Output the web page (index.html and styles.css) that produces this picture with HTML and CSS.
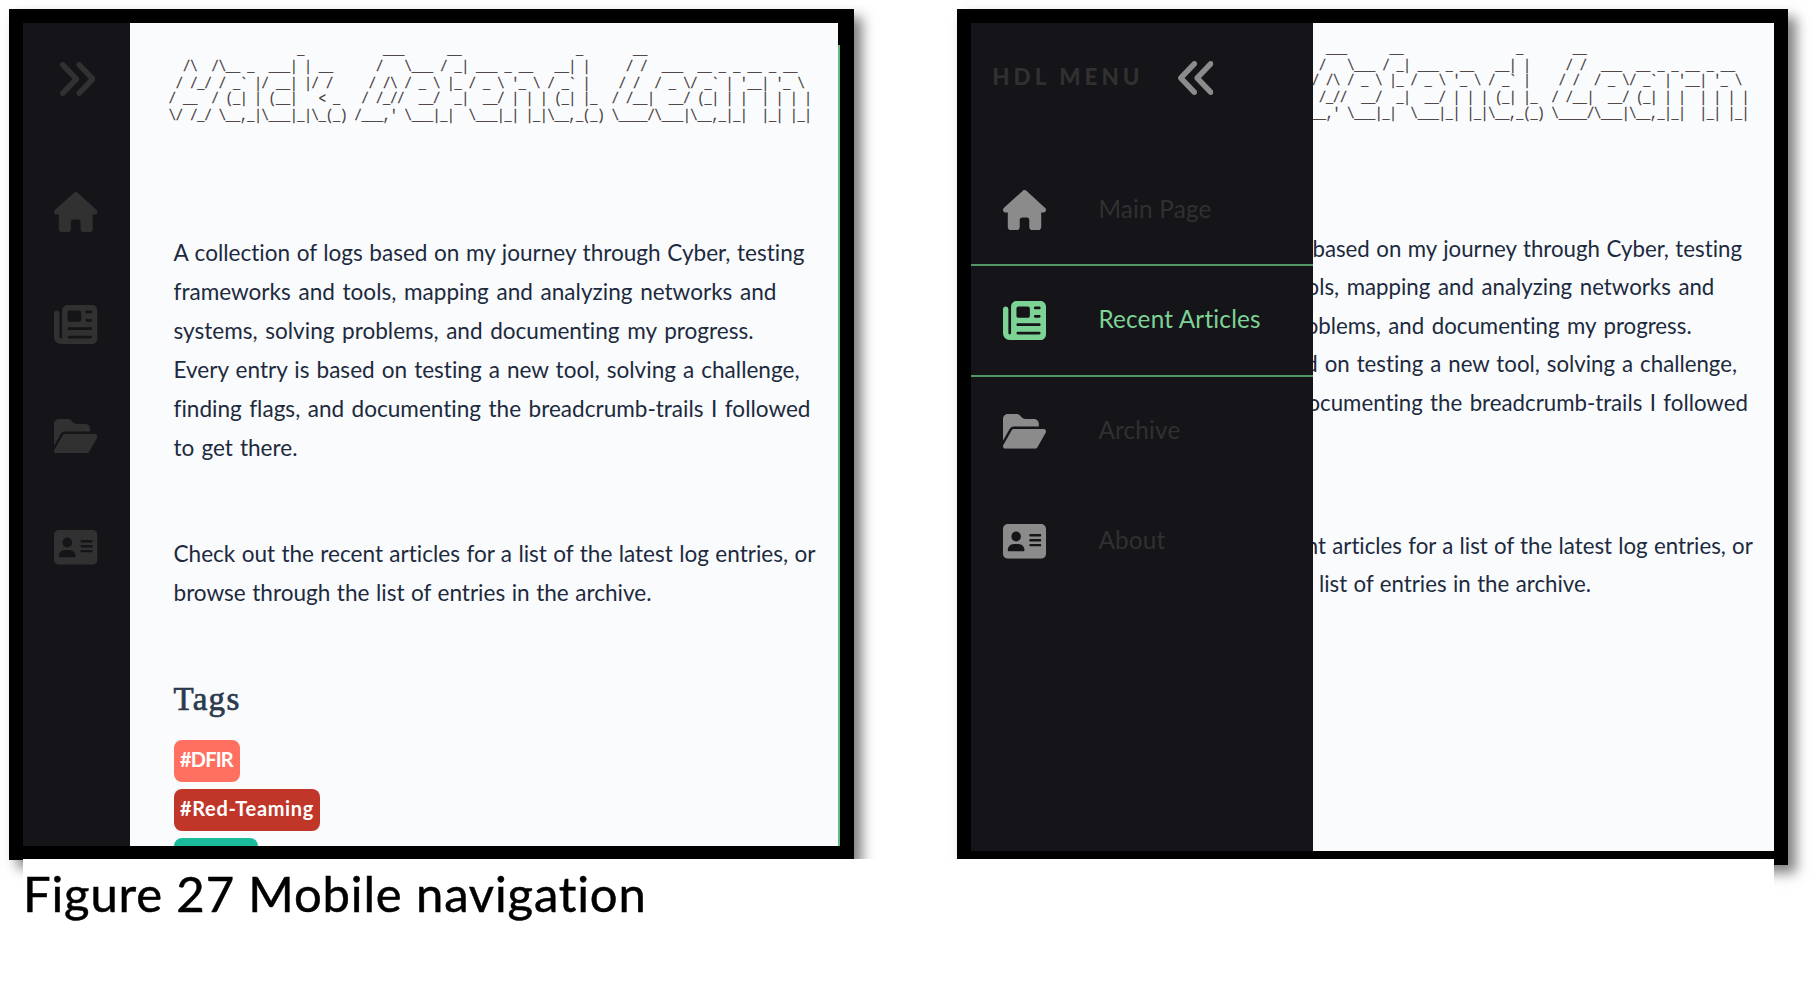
FILE: index.html
```html
<!DOCTYPE html>
<html lang="en">
<head>
<meta charset="utf-8">
<title>Mobile navigation</title>
<link rel="stylesheet" href="styles.css">
</head>
<body>
<svg class="sprite" aria-hidden="true">
  <symbol id="angles" viewBox="64 64 416 384" preserveAspectRatio="none"><path d="M470.6 278.6c12.5-12.5 12.5-32.8 0-45.3l-160-160c-12.5-12.5-32.8-12.5-45.3 0s-12.5 32.8 0 45.3L402.7 256 265.4 393.4c-12.5 12.5-12.5 32.8 0 45.3s32.8 12.5 45.3 0l160-160zm-352 160l160-160c12.5-12.5 12.5-32.8 0-45.3l-160-160c-12.5-12.5-32.8-12.5-45.3 0s-12.5 32.8 0 45.3L210.7 256 73.4 393.4c-12.5 12.5-12.5 32.8 0 45.3s32.8 12.5 45.3 0z"/></symbol>
  <symbol id="house" viewBox="0 0 576 512" preserveAspectRatio="none"><path d="M575.8 255.5c0 18-15 32.1-32 32.1h-32l.7 160.2c0 2.7-.2 5.4-.5 8.1V472c0 22.1-17.9 40-40 40H392c-22.1 0-40-17.9-40-40V384c0-17.7-14.3-32-32-32H256c-17.7 0-32 14.3-32 32v88c0 22.1-17.9 40-40 40H104c-22.1 0-40-17.9-40-40V287.6H32c-18 0-32-14-32-32.1c0-9 3-17 10-24L266.4 8c7-7 15-8 22-8s15 2 21 7L564.8 231.5c8 7 12 15 11 24z"/></symbol>
  <symbol id="news" viewBox="0 32 512 448" preserveAspectRatio="none"><path d="M96 96c0-35.3 28.7-64 64-64H448c35.3 0 64 28.7 64 64V416c0 35.3-28.7 64-64 64H80c-44.2 0-80-35.8-80-80V128c0-17.7 14.3-32 32-32s32 14.3 32 32V400c0 8.8 7.2 16 16 16s16-7.2 16-16V96zm64 24v80c0 13.3 10.7 24 24 24H296c13.3 0 24-10.7 24-24V120c0-13.3-10.7-24-24-24H184c-13.3 0-24 10.7-24 24zm208-8c0 8.8 7.2 16 16 16h48c8.8 0 16-7.2 16-16s-7.2-16-16-16H384c-8.8 0-16 7.2-16 16zm0 96c0 8.8 7.2 16 16 16h48c8.8 0 16-7.2 16-16s-7.2-16-16-16H384c-8.8 0-16 7.2-16 16zM160 304c0 8.8 7.2 16 16 16H432c8.8 0 16-7.2 16-16s-7.2-16-16-16H176c-8.8 0-16 7.2-16 16zm0 96c0 8.8 7.2 16 16 16H432c8.8 0 16-7.2 16-16s-7.2-16-16-16H176c-8.8 0-16 7.2-16 16z"/></symbol>
  <symbol id="folder" viewBox="0 32 576 448" preserveAspectRatio="none"><path d="M88.7 223.8L0 375.8V96C0 60.7 28.7 32 64 32H181.5c17 0 33.3 6.7 45.3 18.7l26.5 26.5c12 12 28.3 18.7 45.3 18.7H416c35.3 0 64 28.7 64 64v32H144c-22.8 0-43.8 12.1-55.3 31.8zm27.6 16.1C122.1 230 132.6 224 144 224H544c11.5 0 22 6.1 27.7 16.1s5.7 22.2-.1 32.1l-112 192C453.9 474 443.4 480 432 480H32c-11.5 0-22-6.1-27.7-16.1s-5.7-22.2 .1-32.1l112-192z"/></symbol>
  <symbol id="card" viewBox="0 32 576 448" preserveAspectRatio="none"><path d="M64 32C28.7 32 0 60.7 0 96V416c0 35.3 28.7 64 64 64H512c35.3 0 64-28.7 64-64V96c0-35.3-28.7-64-64-64H64zm80 256h64c44.2 0 80 35.8 80 80c0 8.8-7.2 16-16 16H80c-8.8 0-16-7.2-16-16c0-44.2 35.8-80 80-80zm-32-96a64 64 0 1 1 128 0 64 64 0 1 1-128 0zm256-32H496c8.8 0 16 7.2 16 16s-7.2 16-16 16H368c-8.8 0-16-7.2-16-16s7.2-16 16-16zm0 64H496c8.8 0 16 7.2 16 16s-7.2 16-16 16H368c-8.8 0-16-7.2-16-16s7.2-16 16-16zm0 64H496c8.8 0 16 7.2 16 16s-7.2 16-16 16H368c-8.8 0-16-7.2-16-16s7.2-16 16-16z"/></symbol>
</svg>
<main class="figure">
  <div class="shots">
    <section class="frame frame-closed">
      <div class="screen">
        <nav class="rail">
          <div class="rail-toggle"><svg class="ico ico-angles"><use href="#angles"/></svg></div>
          <div class="rail-item"><svg class="ico ico-house"><use href="#house"/></svg></div>
          <div class="rail-item"><svg class="ico ico-news"><use href="#news"/></svg></div>
          <div class="rail-item"><svg class="ico ico-flat"><use href="#folder"/></svg></div>
          <div class="rail-item"><svg class="ico ico-flat"><use href="#card"/></svg></div>
        </nav>
        <article class="content">
<pre class="banner">
                  _           ___      __                _       __
  /\  /\__ _  ___| | __      /   \___ / _| ___ _ __   __| |     / /  ___  __ _ _ __ _ __
 / /_/ / _` |/ __| |/ /     / /\ / _ \ |_ / _ \ '_ \ / _` |    / /  / _ \/ _` | '__| '_ \
/ __  / (_| | (__|   &lt; _   / /_//  __/  _|  __/ | | | (_| |_  / /__|  __/ (_| | |  | | | |
\/ /_/ \__,_|\___|_|\_(_) /___,' \___|_|  \___|_| |_|\__,_(_) \____/\___|\__,_|_|  |_| |_|
</pre>
          <p class="para">
            <span class="line w1">A collection of logs based on my journey through Cyber, testing</span>
            <span class="line w2">frameworks and tools, mapping and analyzing networks and</span>
            <span class="line w3">systems, solving problems, and documenting my progress.</span>
            <span class="line w4">Every entry is based on testing a new tool, solving a challenge,</span>
            <span class="line w5">finding flags, and documenting the breadcrumb-trails I followed</span>
            <span class="line w6">to get there.</span>
          </p>
          <p class="para">
            <span class="line w7">Check out the recent articles for a list of the latest log entries, or</span>
            <span class="line w8">browse through the list of entries in the archive.</span>
          </p>
          <h2 class="heading">Tags</h2>
          <div class="tags">
            <span class="tag tag-dfir">#DFIR</span>
            <span class="tag tag-red">#Red-Teaming</span>
            <span class="tag tag-green"></span>
          </div>
        </article>
      </div>
    </section>
    <section class="frame frame-open">
      <div class="screen">
        <article class="content">
<pre class="banner">
                  _           ___      __                _       __
  /\  /\__ _  ___| | __      /   \___ / _| ___ _ __   __| |     / /  ___  __ _ _ __ _ __
 / /_/ / _` |/ __| |/ /     / /\ / _ \ |_ / _ \ '_ \ / _` |    / /  / _ \/ _` | '__| '_ \
/ __  / (_| | (__|   &lt; _   / /_//  __/  _|  __/ | | | (_| |_  / /__|  __/ (_| | |  | | | |
\/ /_/ \__,_|\___|_|\_(_) /___,' \___|_|  \___|_| |_|\__,_(_) \____/\___|\__,_|_|  |_| |_|
</pre>
          <p class="para">
            <span class="line w1">A collection of logs based on my journey through Cyber, testing</span>
            <span class="line w2">frameworks and tools, mapping and analyzing networks and</span>
            <span class="line w3">systems, solving problems, and documenting my progress.</span>
            <span class="line w4">Every entry is based on testing a new tool, solving a challenge,</span>
            <span class="line w5">finding flags, and documenting the breadcrumb-trails I followed</span>
            <span class="line w6">&nbsp;</span>
          </p>
          <p class="para">
            <span class="line w7">Check out the recent articles for a list of the latest log entries, or</span>
            <span class="line w8">browse through the list of entries in the archive.</span>
          </p>
        </article>
        <nav class="drawer">
          <div class="drawer-head"><span class="drawer-title">HDL MENU</span><svg class="ico ico-angles flip"><use href="#angles"/></svg></div>
          <div class="drawer-item"><svg class="ico ico-house"><use href="#house"/></svg><span class="label">Main Page</span></div>
          <div class="drawer-item active"><svg class="ico ico-news"><use href="#news"/></svg><span class="label">Recent Articles</span></div>
          <div class="drawer-item"><svg class="ico ico-flat"><use href="#folder"/></svg><span class="label">Archive</span></div>
          <div class="drawer-item"><svg class="ico ico-flat"><use href="#card"/></svg><span class="label">About</span></div>
        </nav>
      </div>
    </section>
  </div>
  <div class="caption"><span class="caption-text">Figure 27 Mobile navigation</span></div>
</main>
</body>
</html>
```

FILE: styles.css
```css
* { box-sizing: border-box; }
body {
  margin: 0;
  background: #fff;
  font-family: Lato, "Open Sans", sans-serif;
  font-variant-ligatures: none;
  overflow: hidden;
}
.sprite { display: block; width: 0; height: 0; }
.figure { width: 1816px; height: 981px; padding: 9px 0 0 9px; overflow: hidden; }
.shots { display: flex; align-items: flex-start; gap: 103.5px; height: 850px; }

.frame { background: #000; box-shadow: 8px 8px 12px rgba(0, 0, 0, .5); }
.frame-closed { --u: 1px; width: 844.7px; height: 851px; padding: 14px; }
.frame-open { --u: .987px; width: 831px; height: 856px; padding: 14px; }
.screen { position: relative; display: flex; overflow: hidden; background: #f9fbfd; }
.frame-closed .screen {
  width: 817px;
  height: 823px;
  border-right: 2px solid;
  border-image: linear-gradient(#000 23px, #62b97c 23px) 1;
}
.frame-open .screen { width: 803px; height: 828px; padding-left: 107px; }

.ico { display: block; flex: none; fill: currentColor; width: 43.5px; }
.ico-angles { width: 35.5px; height: 34px; }
.ico-house { height: 40px; }
.ico-news { height: 39px; }
.ico-flat { height: 34.8px; }
.flip { transform: scaleX(-1); }

.rail { width: 107px; height: 823px; flex: none; background: #151419; color: #313131; }
.rail-toggle { height: 133.5px; padding: 39px 0 0 36.7px; }
.rail-item { display: flex; align-items: center; height: 111.8px; padding-left: 31.4px; }

.content { flex: none; width: 700px; padding: calc(var(--u) * 18.5) 0 0 calc(var(--u) * 43.5); }
.frame-open .content { padding-left: 41px; }
.banner {
  height: calc(var(--u) * 83);
  margin: 0 0 0 calc(var(--u) * -4.8);
  font: calc(var(--u) * 11.91)/calc(var(--u) * 12.77) "Liberation Mono", monospace;
  color: #3d3434;
  -webkit-text-stroke: .2px #3d3434;
  transform: scaleY(1.3);
  transform-origin: 0 0;
}
.para {
  margin: 0;
  padding-top: calc(var(--u) * 67);
  font-size: calc(var(--u) * 22.55);
  line-height: calc(var(--u) * 39);
  color: #1d2a3d;
}
.banner + .para { padding-top: calc(var(--u) * 108); }
.line { display: block; white-space: nowrap; text-align: justify; text-align-last: justify; }
.w1 { width: calc(var(--u) * 631); }
.w2 { width: calc(var(--u) * 603); }
.w3 { width: calc(var(--u) * 580); }
.w4 { width: calc(var(--u) * 626); }
.w5 { width: calc(var(--u) * 637); }
.w6 { width: calc(var(--u) * 124); }
.w7 { width: calc(var(--u) * 642); }
.w8 { width: calc(var(--u) * 478); }
.heading {
  margin: 65px 0 0;
  font: 400 33px/44px "Liberation Serif", serif;
  letter-spacing: 1.3px;
  color: #2c3a4c;
  -webkit-text-stroke: .7px #2c3a4c;
}
.tags { display: flex; flex-direction: column; gap: 6.5px; padding-top: 19px; }
.tag {
  height: 42.5px;
  flex: none;
  padding-left: 6.5px;
  border-radius: 8px;
  color: #fff;
  font-size: 20px;
  font-weight: 700;
  line-height: 39px;
  white-space: nowrap;
}
.tag-dfir { width: 66px; background: #ff7061; letter-spacing: -.8px; }
.tag-red { width: 146px; background: #c0372a; letter-spacing: .65px; }
.tag-green { width: 84.5px; background: #1abc9c; }

.drawer { position: absolute; left: 0; top: 0; width: 341.5px; height: 828px; background: #151419; color: #8b8b8b; }
.drawer-head { display: flex; align-items: center; gap: 38.5px; height: 132px; padding: 0 0 22px 21px; }
.drawer-title { width: 147px; font-size: 22.5px; font-weight: 900; letter-spacing: 4px; line-height: 30px; margin-top: -2px; color: #303030; white-space: nowrap; }
.drawer-item { display: flex; align-items: center; gap: 52.5px; height: 110.5px; padding-left: 31.7px; }
.drawer-item .ico { width: 43px; }
.label { font-size: 24.3px; line-height: 30px; padding-bottom: 3px; letter-spacing: .2px; color: #303030; white-space: nowrap; }
.active { height: 113px; margin: -1.5px 0 -1px; color: #7dd395; border: solid #4f9866; border-width: 2px 0; }
.active .label { color: #7dd395; }

.caption { position: relative; width: 1751px; height: 122px; margin-left: 14px; background: #fff; }
.caption-text { display: block; font-size: 49px; line-height: 68px; letter-spacing: .85px; color: #000; white-space: nowrap; -webkit-text-stroke: .5px #000; }
```
